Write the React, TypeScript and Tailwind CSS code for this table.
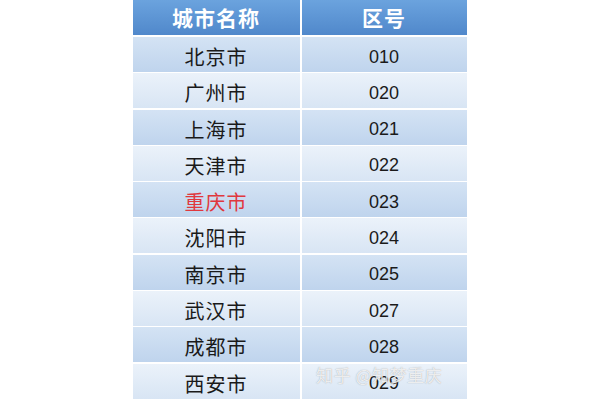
import React from "react";

const rows: [string, string][] = [
  ["北京市", "010"],
  ["广州市", "020"],
  ["上海市", "021"],
  ["天津市", "022"],
  ["重庆市", "023"],
  ["沈阳市", "024"],
  ["南京市", "025"],
  ["武汉市", "027"],
  ["成都市", "028"],
  ["西安市", "029"],
];

export default function App() {
  return (
    <div className="w-[600px] h-[400px] bg-white flex justify-center overflow-hidden relative font-['Noto_Sans_CJK_SC','Noto_Sans',sans-serif]">
      <div className="w-[334px] ml-[-1px] flex flex-col gap-[2px] bg-white">
        <div className="h-[35px] grid grid-cols-[167px_1fr] gap-[2px]">
          <div className="bg-gradient-to-b from-[#6ba3de] to-[#5088cb] flex items-center justify-center text-white font-bold text-[21px] tracking-[1px]">
            城市名称
          </div>
          <div className="bg-gradient-to-b from-[#6ba3de] to-[#5088cb] flex items-center justify-center text-white font-bold text-[21px] tracking-[1px]">
            区号
          </div>
        </div>
        {rows.map(([city, code], i) => {
          const dark = i % 2 === 0;
          const bg = dark
            ? "bg-gradient-to-b from-[#d4e3f4] to-[#bfd4ed]"
            : "bg-gradient-to-b from-[#ebf2fa] to-[#d8e5f4]";
          return (
            <div key={city} className="h-[34.3px] grid grid-cols-[167px_1fr] gap-[2px]">
              <div
                className={`${bg} flex items-center justify-center pt-[5px] text-[20px] tracking-[1px] ${
                  city === "重庆市" ? "text-[#e0383e]" : "text-[#1a1a1a]"
                }`}
              >
                {city}
              </div>
              <div
                className={`${bg} flex items-center justify-center pt-[5px] text-[18px] text-[#1a1a1a] font-['Liberation_Sans',Arial,sans-serif]`}
              >
                {code}
              </div>
            </div>
          );
        })}
      </div>
      <div className="absolute left-[316px] top-[362px] text-[17px] text-white/80 tracking-[0.5px] [text-shadow:0_0_1px_rgba(120,120,120,0.7)]">
        知乎 @知梦重庆
      </div>
    </div>
  );
}
